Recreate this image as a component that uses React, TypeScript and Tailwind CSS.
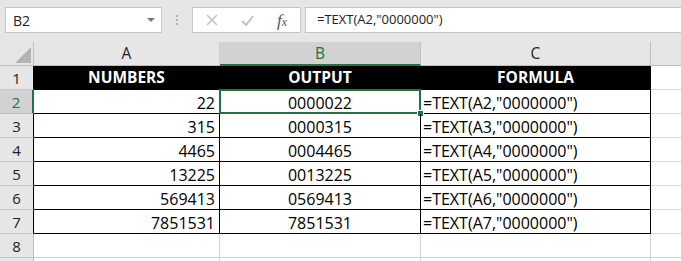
import React from "react";

const FONT = { fontFamily: '"Open Sans", "Liberation Sans", sans-serif' };

const rows = [
  { n: "22", o: "0000022", f: '=TEXT(A2,"0000000")' },
  { n: "315", o: "0000315", f: '=TEXT(A3,"0000000")' },
  { n: "4465", o: "0004465", f: '=TEXT(A4,"0000000")' },
  { n: "13225", o: "0013225", f: '=TEXT(A5,"0000000")' },
  { n: "569413", o: "0569413", f: '=TEXT(A6,"0000000")' },
  { n: "7851531", o: "7851531", f: '=TEXT(A7,"0000000")' },
];

function RowHeader({ n, selected, table }: { n?: number; selected?: boolean; table?: boolean }) {
  if (selected) {
    return (
      <div className="h-[24px] bg-[#d2d2d2] border-b border-b-[#bdbdbd] border-r-2 border-r-[#217346] flex items-center justify-center text-[15px] text-[#217346] pt-[1px]">
        {n}
      </div>
    );
  }
  return (
    <div
      className={
        "h-[24px] bg-[#e6e6e6] border-b border-b-[#c8c8c8] border-r flex items-center justify-center text-[15px] text-[#222] pt-[1px] " +
        (table ? "border-r-black" : "border-r-[#bdbdbd]")
      }
    >
      {n}
    </div>
  );
}

export default function App() {
  return (
    <div className="w-[681px] h-[261px] overflow-hidden bg-[#e6e6e6] relative" style={FONT}>
      {/* Toolbar */}
      <div className="h-[42px] flex items-start pt-[7px]">
        <div className="ml-[5px] w-[157px] h-[26px] bg-white border border-[#c6c6c6] flex items-center pl-[7px] pr-[6px] text-[14px] text-[#222]">
          <span className="flex-1">B2</span>
          <svg width="8" height="5" viewBox="0 0 8 5">
            <path d="M0 0 L8 0 L4 4 Z" fill="#7a7a7a" />
          </svg>
        </div>
        <div className="w-[30px] h-[26px] flex flex-col items-center justify-center gap-[2px]">
          <div className="w-[2px] h-[2px] bg-[#b0b0b0]" />
          <div className="w-[2px] h-[2px] bg-[#b0b0b0]" />
          <div className="w-[2px] h-[2px] bg-[#b0b0b0]" />
        </div>
        <div className="w-[109px] h-[26px] bg-white border border-[#c6c6c6] flex items-center">
          <svg className="ml-[13px]" width="12" height="12" viewBox="0 0 12 12">
            <path d="M1 1 L11 11 M11 1 L1 11" stroke="#c2c2c2" strokeWidth="1.5" />
          </svg>
          <svg className="ml-[23px]" width="13" height="11" viewBox="0 0 13 11">
            <path d="M1 6 L5 10 L12 1" stroke="#c2c2c2" strokeWidth="2" fill="none" />
          </svg>
          <span
            className="ml-[23px] text-[17px] italic text-[#555] leading-none"
            style={{ fontFamily: '"Liberation Serif", serif' }}
          >
            f<span className="text-[12px]">x</span>
          </span>
        </div>
        <div className="ml-[4px] flex-1 h-[26px] bg-white border border-[#c6c6c6] border-r-0 flex items-center pl-[11px] text-[13px] text-[#222]">
          =TEXT(A2,"0000000")
        </div>
      </div>

      {/* Grid */}
      <div className="grid grid-cols-[34px_186px_201px_230px_1fr] bg-white">
        {/* header row */}
        <div className="h-[24px] bg-[#e6e6e6] border-r border-r-[#bdbdbd] border-b border-b-[#bdbdbd] relative">
          <svg className="absolute left-[15px] top-[5px]" width="16" height="16" viewBox="0 0 16 16">
            <path d="M16 0 L16 16 L0 16 Z" fill="#b4b4b4" />
          </svg>
        </div>
        <div className="h-[24px] bg-[#e6e6e6] border-r border-r-[#d0d0d0] border-b border-b-[#bdbdbd] flex items-center justify-center text-[15.5px] text-[#222] pt-[1px]">
          A
        </div>
        <div className="h-[24px] bg-[#d2d2d2] border-r border-r-[#c0c0c0] border-b-2 border-b-[#217346] flex items-center justify-center text-[15.5px] text-[#217346] pt-[2px]">
          B
        </div>
        <div className="h-[24px] bg-[#e6e6e6] border-r border-r-[#bdbdbd] border-b border-b-[#bdbdbd] flex items-center justify-center text-[15.5px] text-[#222] pt-[1px]">
          C
        </div>
        <div className="h-[24px] bg-[#e6e6e6] border-b border-b-[#bdbdbd]" />

        {/* row 1 */}
        <RowHeader n={1} table />
        <div className="h-[24px] bg-black border-r border-b border-black flex items-center justify-center text-[15.5px] font-bold text-white pt-[1px]">
          NUMBERS
        </div>
        <div className="h-[24px] bg-black border-r border-b border-black flex items-center justify-center text-[15.5px] font-bold text-white pt-[1px]">
          OUTPUT
        </div>
        <div className="h-[24px] bg-black border-r border-b border-black flex items-center justify-center text-[15.5px] font-bold text-white pt-[1px]">
          FORMULA
        </div>
        <div className="h-[24px] border-b border-[#d4d4d4]" />

        {rows.map((r, i) => (
          <React.Fragment key={i}>
            <RowHeader n={i + 2} selected={i === 0} table />
            <div className="h-[24px] border-r border-b border-black flex items-center justify-end pr-[4px] text-[16px] text-black pt-[2px]">
              {r.n}
            </div>
            <div className="h-[24px] border-r border-b border-black flex items-center justify-center text-[16px] text-black pt-[2px] relative">
              {r.o}
              {i === 0 && (
                <>
                  <div className="absolute -left-[1px] -top-[1px] -right-[1px] -bottom-[1px] border-2 border-[#217346]" />
                  <div className="absolute -right-[4px] -bottom-[4px] w-[7px] h-[7px] bg-[#217346] border border-white" />
                </>
              )}
            </div>
            <div className="h-[24px] border-r border-b border-black flex items-center pl-[2px] text-[16px] text-black pt-[2px]">
              {r.f}
            </div>
            <div className="h-[24px] border-b border-[#d4d4d4]" />
          </React.Fragment>
        ))}

        <RowHeader n={8} />
        <div className="h-[24px] border-r border-b border-[#d4d4d4]" />
        <div className="h-[24px] border-r border-b border-[#d4d4d4]" />
        <div className="h-[24px] border-r border-b border-[#d4d4d4]" />
        <div className="h-[24px] border-b border-[#d4d4d4]" />

        <RowHeader />
        <div className="h-[24px] border-r border-b border-[#d4d4d4]" />
        <div className="h-[24px] border-r border-b border-[#d4d4d4]" />
        <div className="h-[24px] border-r border-b border-[#d4d4d4]" />
        <div className="h-[24px] border-b border-[#d4d4d4]" />
      </div>
    </div>
  );
}
